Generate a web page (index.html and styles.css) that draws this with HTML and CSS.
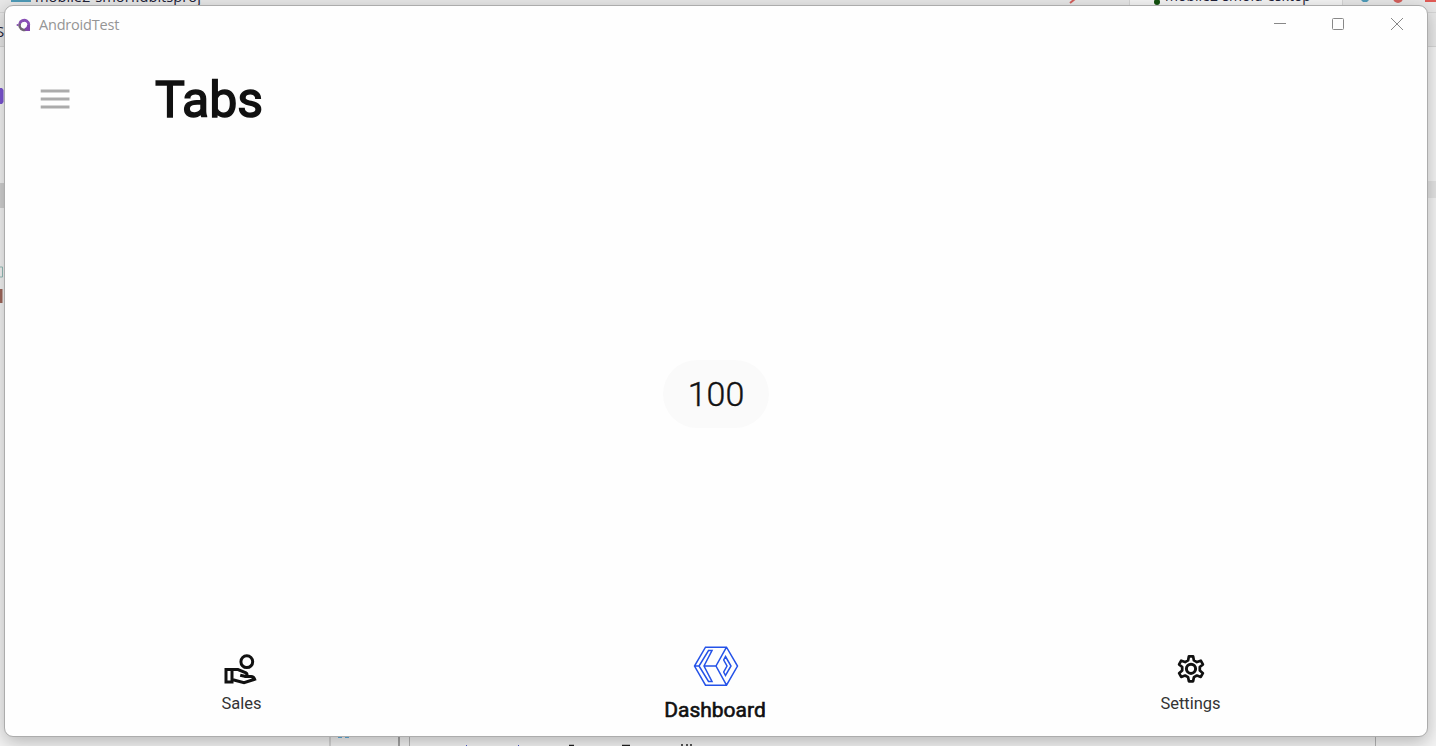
FILE: index.html
```html
<!DOCTYPE html>
<html lang="en">
<head>
<meta charset="utf-8">
<title>AndroidTest</title>
<link rel="stylesheet" href="styles.css">
</head>
<body>
<div class="desktop">
  <div class="ide-tabs"></div>
  <div class="ide-active-tab"></div>
  <div class="ide-toolbar"></div>
  <div class="ide-text ide-project">mobile2-smorf.dbitsproj</div>
  <div class="ide-text ide-file">mobile2-smold-esktop</div>
  <div class="ide-text ide-letter">S</div>
  <svg class="ide-marks" width="1436" height="746" viewBox="0 0 1436 746">
    <path d="M11 0h20v2H11z" fill="#4f9bb8"/>
    <path d="M1070 3l5-4" stroke="#d4605c" stroke-width="2"/>
    <circle cx="1157" cy="2" r="3" fill="#14520f"/>
    <path d="M1361 0h8l-2 2h-4z" fill="#4f9bb8"/>
    <circle cx="1398" cy="-2" r="5" fill="#d4605c"/>
    <path d="M1425 0h11v2h-11z" fill="#e05a55"/>
    <path d="M0 88h2l1.500 2v12l-1.500 2H0z" fill="#7c55d4"/>
    <path d="M0 183h5v25H0z" fill="#d2d2d2"/>
    <path d="M0 267h2.500v10H0" fill="none" stroke="#94bdb8"/>
    <path d="M0 289h2.500v14H0z" fill="#a0685c"/>
    <path d="M1427 181h9v17h-9z" fill="#e4e4e4"/>
    <path d="M330 737h80v9h-80z" fill="#f2f2f2"/>
    <path d="M330 737v9M409.500 737v9M1375.500 737v9" stroke="#b5b5b5"/>
    <path d="M399 737v9" stroke="#888" stroke-width="1.500"/>
    <path d="M338 737h4M345 737h4" stroke="#62b0e0" stroke-width="2"/>
    <path d="M466 745.500h1M518 745.500h1" stroke="#4b55c8"/>
    <path d="M569 745.500h5M622 745.500h8M681 745h2M686 745h2M690 745h2" stroke="#222" stroke-width="1.500"/>
  </svg>
  <main class="window">
    <header class="titlebar">
      <svg class="app-icon" width="16" height="16" viewBox="0 0 16 16">
        <path d="M8 3.700a4.600 4.600 0 1 0 3 8.200" fill="none" stroke="#6f6673" stroke-width="2.500"/>
        <path d="M3.700 6.800A4.600 4.600 0 1 1 11 11.500" fill="none" stroke="#8950b5" stroke-width="2.800"/>
        <path d="M10.500 8H14v6H9.500l-1-2z" fill="#8245ad"/>
        <circle cx="1.600" cy="8" r="1.100" fill="#8950b5"/>
        <circle cx="8" cy="8" r="3" fill="#fefefe"/>
      </svg>
      <span class="app-name">AndroidTest</span>
      <svg class="controls" width="132" height="16" viewBox="0 0 132 16" fill="none" stroke="#888">
        <path d="M1 7.500h12"/>
        <rect x="59.500" y="2.500" width="11" height="11" rx="1"/>
        <path d="M118 2l12 12M130 2l-12 12"/>
      </svg>
    </header>
    <section class="appbar">
      <svg class="menu" width="30" height="21" viewBox="0 0 30 21" fill="#ababab">
        <path d="M.700 .500h28.800v3H.700zM.700 8.500h28.800v3H.700zM.700 16.500h28.800v3H.700z"/>
      </svg>
      <h1 class="title">Tabs</h1>
    </section>
    <section class="content"><div class="chip">100</div></section>
    <nav class="tabs">
      <a class="tab sales">
        <svg width="34" height="34" viewBox="0 0 34 34" fill="none" stroke="#111" stroke-width="3">
          <circle cx="23.800" cy="8.700" r="5.900"/>
          <path d="M3 16.500h6v12.500H3zM9 16.500h6l8 3.300q1.500.8.700 2.700-.500 1-2 .8l-4.500-1M21.500 23.500h6.500q3 .300 3.700 2.800L21 29.700 9 26.500"/>
        </svg>
        <span>Sales</span>
      </a>
      <a class="tab tab-active">
        <svg width="48" height="44" viewBox="0 0 48 44" fill="none" stroke="#2452e8" stroke-width="1.500">
          <path d="M13.500 3.200H34.500L45.500 22 34.500 41.200H13.500L2.500 22zM34.500 3.200L24 22l10.500 19.200M2.500 22H7M12 22H24M16.500 6.500H20L12 22l8 15.500h-3.500L7 22zM33.500 12.500l5.500 9.500-5.500 9.500-1.800-3.500 3.300-6-3.300-6z"/>
        </svg>
        <span>Dashboard</span>
      </a>
      <a class="tab settings">
        <svg width="34" height="34" viewBox="0 0 34 34" fill="none" stroke="#111" stroke-width="2.700" stroke-linejoin="round">
          <path d="M14.900 3.300h4.200l.800 4.100 3 1.700 3.900-1.400 2.100 3.700-3.100 2.700v3.400l3.100 2.700-2.100 3.700-3.900-1.400-3 1.700-.800 4.100h-4.200l-.800-4.100-3-1.700-3.900 1.400-2.100-3.700 3.100-2.700v-3.400l-3.100-2.700 2.100-3.700 3.900 1.400 3-1.700z"/>
          <circle cx="17" cy="15.800" r="4.600" stroke-width="3"/>
        </svg>
        <span>Settings</span>
      </a>
    </nav>
  </main>
</div>
</body>
</html>
```
FILE: styles.css
```css
body { margin: 0; }
.desktop {
  position: relative;
  width: 1436px;
  height: 746px;
  overflow: hidden;
  background: #f4f4f4;
  font-family: Roboto, sans-serif;
}
.ide-tabs, .ide-active-tab, .ide-toolbar, .ide-text, .ide-marks { position: absolute; }
.ide-tabs { inset: 0 0 auto; height: 12px; background: #e8e8e8; border-bottom: 1px solid #d6d6d6; }
.ide-active-tab { left: 1129px; top: 0; width: 212px; height: 12px; background: #f5f5f5; border: solid #d6d6d6; border-width: 0 1px; }
.ide-toolbar { top: 13px; left: 0; right: 0; height: 33px; background: #e8e8e8; border-bottom: 1px solid #d6d6d6; }
.ide-text { font: 15px/18px "Open Sans", sans-serif; color: #222238; white-space: nowrap; }
.ide-project { left: 35px; top: -13px; font-size: 14.700px; }
.ide-file { left: 1165px; top: -13px; font-size: 14px; }
.ide-letter { left: -4px; top: 22px; }
.ide-marks { left: 0; top: 0; }
.window {
  position: absolute;
  left: 4px;
  top: 5px;
  width: 1422px;
  height: 730px;
  display: flex;
  flex-direction: column;
  background: #fefefe;
  border: 1px solid #acacac;
  border-radius: 9px;
  box-shadow: 0 5px 18px rgba(0, 0, 0, .26);
}
.titlebar { display: flex; align-items: center; height: 37px; padding: 0 17px 0 11px; }
.app-icon { flex: none; margin-right: 7px; }
.app-name { font: 14.500px/20px "Open Sans", sans-serif; letter-spacing: -.2px; color: #959595; }
.controls { margin: 0 5px 2px auto; }
.appbar { display: flex; align-items: center; height: 112px; padding-left: 35px; }
.menu { margin-right: 85px; }
.title {
  margin: 2px 0 0;
  font-size: 50px;
  font-weight: 400;
  line-height: 60px;
  color: #111;
  -webkit-text-stroke: 1.500px #111;
}
.content { flex: 1; display: flex; justify-content: center; align-items: center; padding-bottom: 6px; }
.chip {
  width: 106px;
  height: 68px;
  border-radius: 34px;
  background: #fafafa;
  text-align: center;
  font-size: 34px;
  font-weight: 300;
  line-height: 69px;
  color: #111;
  -webkit-text-stroke: .4px #111;
}
.tabs { display: grid; grid-template-columns: repeat(3, 1fr); height: 98px; }
.tab { display: flex; flex-direction: column; align-items: center; padding-top: 15px; font-size: 16.500px; line-height: 20px; color: #333; }
.tab span { margin-top: 7px; }
.sales { padding-right: 1px; }
.sales svg { margin-right: 3px; }
.settings { padding-left: 2px; }
.settings span { margin-right: 1px; }
.tab-active { padding-top: 6px; font-size: 21px; line-height: 24px; color: #111; }
.tab-active span { margin: 10px 2px 0 0; -webkit-text-stroke: .6px #111; }
```
